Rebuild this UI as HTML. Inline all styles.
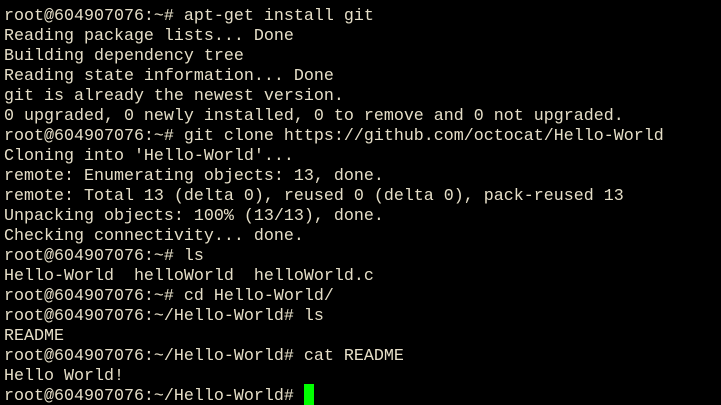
<!DOCTYPE html>
<html><head><style>
html,body{margin:0;padding:0;background:#000;width:721px;height:405px;overflow:hidden}
pre{margin:0;padding:7px 0 0 4px;font-family:"Liberation Mono",monospace;font-size:16.67px;line-height:20px;color:#e6dfc8}
.c{position:absolute;left:304px;top:384px;width:10px;height:21px;background:#00ff00}
</style></head><body><pre>root@604907076:~# apt-get install git
Reading package lists... Done
Building dependency tree
Reading state information... Done
git is already the newest version.
0 upgraded, 0 newly installed, 0 to remove and 0 not upgraded.
root@604907076:~# git clone https://github.com/octocat/Hello-World
Cloning into 'Hello-World'...
remote: Enumerating objects: 13, done.
remote: Total 13 (delta 0), reused 0 (delta 0), pack-reused 13
Unpacking objects: 100% (13/13), done.
Checking connectivity... done.
root@604907076:~# ls
Hello-World  helloWorld  helloWorld.c
root@604907076:~# cd Hello-World/
root@604907076:~/Hello-World# ls
README
root@604907076:~/Hello-World# cat README
Hello World!
root@604907076:~/Hello-World# </pre><div class="c"></div></body></html>
